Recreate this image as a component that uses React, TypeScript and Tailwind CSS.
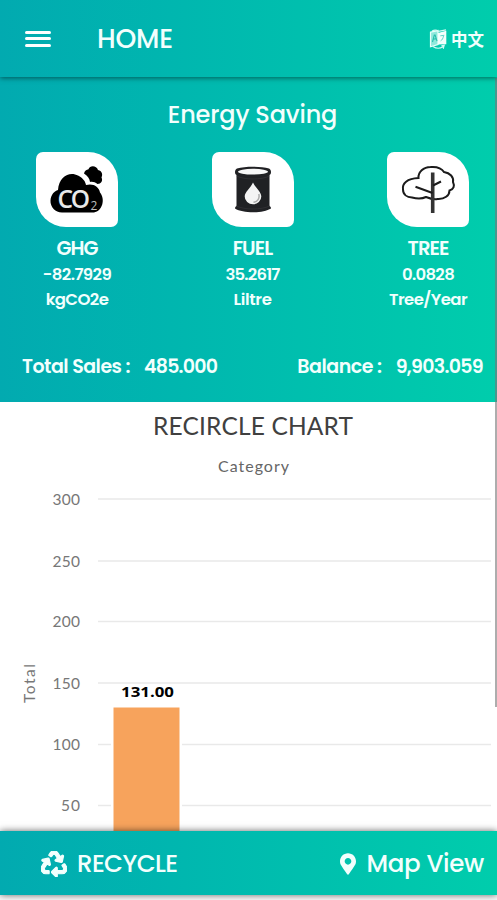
import React from "react";
import { FaRecycle, FaMapMarkerAlt } from "react-icons/fa";

const gradient = "bg-linear-to-r from-[#02aab0] to-[#00cdac]";

function LanguageIcon() {
  return (
    <svg width="19" height="20" viewBox="0 0 19 20" fill="none">
      <path d="M1.5 3.2 9 1.600v14L1.500 17.800z" fill="#8fe9dc" stroke="#e9fffb" strokeWidth="1.200" />
      <path d="m9 4 8.300-2.300v13.600L9 15.500z" fill="#f2fffc" />
      <path d="m3.500 13 1.800-7h.8L8 12.200M4.200 10.200l3-.6" stroke="#26bfae" strokeWidth="1.100" />
      <path d="M11.300 6.800 15.300 6.300M14.500 7c-.4 2.500-1.300 3.900-2.900 4.900" stroke="#5fd8c8" strokeWidth="1" />
      <path d="M4 17.500c3 2 7 2.100 10 .3l.4 1.100.8-2.700-2.800.6M3 2c3-1.400 5-.8 6.500.4L17 .8" stroke="#d3fbf4" strokeWidth="1.200" />
    </svg>
  );
}

function Co2Icon() {
  return (
    <svg width="82" height="75" viewBox="0 0 82 75">
      <path d="M48 21.500c.5-2.500 2.500-4 4.500-4.300 1-4 8-4.200 9.500.8 4 .8 5 4.500 3.500 7.500 1.700 3.500-.5 6.500-4 6.500-2.500-2-5-2.500-7.500-2-.5-3.500-2-6-6-8.500z" fill="#000" />
      <path d="M26 60.500c-14-.5-15-19-4-22.500C23 24 34 19 42 23.500c5 2.500 7.500 6 8 9.500 7-2 13 1.500 14 7.500 5.500 6.500 2.500 18.500-6 20z" fill="#000" />
      <text x="21.500" y="56" className="fill-[#e8e8e8] font-['Open_Sans',sans-serif] text-[24.500px] font-semibold tracking-[-2.200px]">
        CO<tspan dx="2.500" dy="2" className="fill-[#bdbdbd] text-[12px] font-normal tracking-normal">2</tspan>
      </text>
    </svg>
  );
}

function FuelIcon() {
  return (
    <svg width="82" height="75" viewBox="0 0 82 75">
      <path d="M23 20c0-2 1-3 2-3.500 8-2.500 24-2.500 32 0 1 .5 2 1.500 2 3.500 0 1.500-.5 2.500-1.500 3v31c1 .6 1.500 1.400 1.500 2.500-8 5-28 5-36 0 0-1.100.5-1.900 1.500-2.500V23c-1-.5-1.500-1.500-1.500-3z" fill="#202124" />
      <ellipse cx="41" cy="19.700" rx="15" ry="2.900" fill="#f8f8f8" />
      <path d="M24.500 24c8 4 25 4 33 0M24.500 54c8 4 25 4 33 0" fill="none" stroke="#38383a" strokeWidth=".6" />
      <path d="M41 30.500c2.500 5.500 8.300 9.500 8.300 14a8.300 7.800 0 0 1-16.600 0c0-4.500 5.800-8.500 8.300-14z" fill="#f4f4f4" />
      <path d="M46.800 42c1.200 4.500-1.300 7.700-5.300 8.300" fill="none" stroke="#aaa" strokeWidth="1.500" />
    </svg>
  );
}

function TreeIcon() {
  return (
    <svg width="82" height="75" viewBox="0 0 82 75" fill="none" stroke="#1b1b1b" strokeWidth="2">
      <path d="M31.500 26c-.5-6 5-11 12-11 7-.6 11 1 13.500 5 6 1 10 5 9 10 2 4 .5 7.500-3.500 8.500 0 5-5 9-12 8.500-4 .8-8-.5-11.500-2-4 2-10 1.600-14 .5-5-.3-9-3-9-8-1-6 4-11 15.500-11.500z" />
      <path d="M45.700 20.500V61" strokeWidth="3.600" stroke="#333" />
      <path d="M28.500 34.700 45.500 41M46 33.500l8-4" />
    </svg>
  );
}

const metrics = [
  { label: "GHG", value: "-82.7929", unit: "kgCO2e", icon: <Co2Icon />, l: "tracking-[-0.900px]", v: "tracking-[-0.600px]", u: "tracking-[-0.600px]" },
  { label: "FUEL", value: "35.2617", unit: "Liltre", icon: <FuelIcon />, l: "tracking-[-0.900px]", v: "tracking-[-0.850px]", u: "tracking-[-0.300px]" },
  { label: "TREE", value: "0.0828", unit: "Tree/Year", icon: <TreeIcon />, l: "tracking-[-0.900px]", v: "tracking-[-0.700px]", u: "tracking-[-0.550px]" },
];

const ticks = [
  { label: "300", y: 97 },
  { label: "250", y: 159 },
  { label: "200", y: 219.500 },
  { label: "150", y: 281 },
  { label: "100", y: 342.500 },
  { label: "50", y: 403.500 },
];

function RecircleChart() {
  return (
    <svg width="497" height="429" viewBox="0 0 497 429" className="block font-[Lato,sans-serif] font-normal">
      <text x="153" y="32.500" textLength="200" className="fill-[#404040] text-[24.500px]">RECIRCLE CHART</text>
      <text x="218" y="70" textLength="71" className="fill-[#666] text-[16px]">Category</text>
      {ticks.map((t) => (
        <g key={t.label}>
          <path d={`M98 ${t.y}H491`} stroke="#e9e9e9" strokeWidth="1.500" />
          <text x={t.label === "50" ? 61 : 52.500} y={t.y + 5.500} textLength={t.label === "50" ? 19 : 27.500} className="fill-[#777] text-[15.500px]">{t.label}</text>
        </g>
      ))}
      <rect x="111" y="304" width="71" height="125" fill="#fff" />
      <rect x="113.500" y="305.500" width="66" height="124" fill="#f7a35c" />
      <text transform="translate(35 301) rotate(-90)" textLength="39" className="fill-[#777] text-[15.500px]">Total</text>
      <text x="121" y="294.500" textLength="53" lengthAdjust="spacingAndGlyphs" className="fill-black stroke-white stroke-2 font-['Open_Sans',sans-serif] text-[13.500px] font-bold [paint-order:stroke]">131.00</text>
    </svg>
  );
}

export default function App() {
  return (
    <div className="relative flex h-[900px] w-[497px] flex-col overflow-hidden bg-[#fafafa] font-[Poppins,Inter,sans-serif] font-medium text-[#f2fffd]">
      <header className={`relative z-10 flex h-[77px] shrink-0 items-center pr-[13px] pl-[25px] shadow-[0_1px_5px_rgba(0,0,0,0.5)] ${gradient}`}>
        <div className="flex w-[26px] flex-col gap-[3.500px]">
          <span className="h-[3px] rounded-full bg-white" />
          <span className="h-[3px] rounded-full bg-white" />
          <span className="h-[3px] rounded-full bg-white" />
        </div>
        <h1 className="ml-[46px] text-[26.500px] leading-8 tracking-[-0.200px]">HOME</h1>
        <div className="ml-auto flex items-center gap-[3px]">
          <LanguageIcon />
          <span className="w-[33px] font-['Noto_Sans_CJK_SC',sans-serif] text-[16.500px] leading-5 font-bold whitespace-nowrap">中文</span>
        </div>
      </header>

      <section className={`h-[325px] shrink-0 ${gradient}`}>
        <h2 className="pt-[22px] pl-2 text-center text-[24px] leading-8 tracking-[-0.150px]">Energy Saving</h2>
        <div className="mt-[21px] flex justify-between pr-7 pl-9">
          {metrics.map((m) => (
            <div key={m.label} className="flex w-[82px] flex-col items-center whitespace-nowrap">
              <div className="h-[75px] w-[82px] rounded-tl-[7px] rounded-tr-[30px] rounded-br-[7px] rounded-bl-[30px] bg-white">{m.icon}</div>
              <div className={`mt-2 text-[19.500px] leading-7 font-semibold ${m.l}`}>{m.label}</div>
              <div className={`text-[16.500px] leading-6 font-semibold ${m.v}`}>{m.value}</div>
              <div className={`text-[16.500px] leading-[25px] font-semibold ${m.u}`}>{m.unit}</div>
            </div>
          ))}
        </div>
        <div className="mt-[41px] flex justify-between pr-[14px] pl-[22px] text-[19px] leading-7 font-semibold whitespace-nowrap">
          <div className="flex gap-[14px]"><span className="tracking-[-0.500px]">Total Sales :</span><span className="tracking-[-0.800px]">485.000</span></div>
          <div className="flex gap-[14px]"><span className="tracking-[-0.450px]">Balance :</span><span className="tracking-[-0.700px]">9,903.059</span></div>
        </div>
      </section>

      <main className="h-[429px] shrink-0 bg-white"><RecircleChart /></main>

      <footer className={`relative z-10 flex h-16 shrink-0 items-center justify-between pt-px pr-[13px] pl-[41px] shadow-[0_0_7px_rgba(0,0,0,0.6)] ${gradient}`}>
        <div className="flex items-center gap-[10px]">
          <FaRecycle size={26} className="stroke-[#f2fffd] stroke-[24px]" />
          <span className="text-[24.500px] leading-8 tracking-[-0.600px]">RECYCLE</span>
        </div>
        <div className="flex items-center gap-[10px]">
          <FaMapMarkerAlt className="h-[22px] w-4" />
          <span className="text-[24.500px] leading-8 tracking-[-0.300px]">Map View</span>
        </div>
      </footer>
      <div className="absolute top-[78px] right-0 h-[629px] w-[2px] bg-[#777]/60" />
    </div>
  );
}
